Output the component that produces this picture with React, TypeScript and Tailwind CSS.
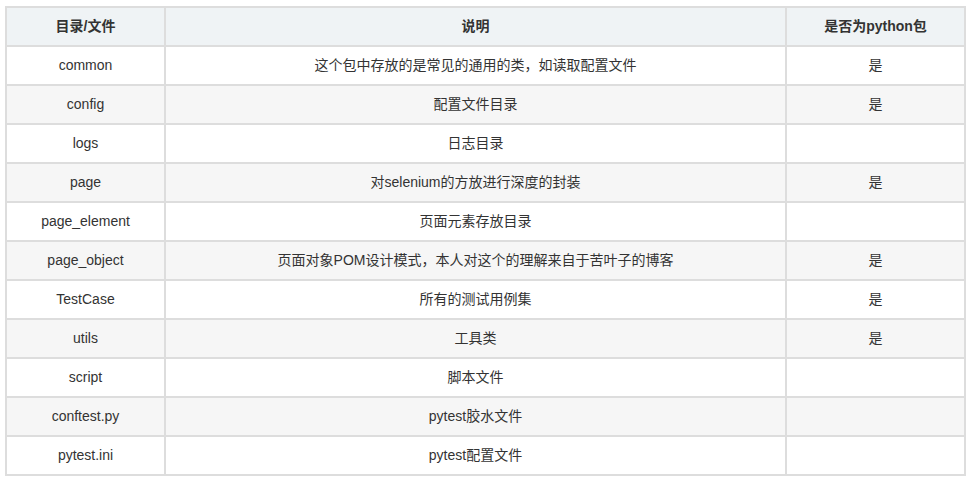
const rows: [string, string, string][] = [
  ["common", "这个包中存放的是常见的通用的类，如读取配置文件", "是"],
  ["config", "配置文件目录", "是"],
  ["logs", "日志目录", ""],
  ["page", "对selenium的方放进行深度的封装", "是"],
  ["page_element", "页面元素存放目录", ""],
  ["page_object", "页面对象POM设计模式，本人对这个的理解来自于苦叶子的博客", "是"],
  ["TestCase", "所有的测试用例集", "是"],
  ["utils", "工具类", "是"],
  ["script", "脚本文件", ""],
  ["conftest.py", "pytest胶水文件", ""],
  ["pytest.ini", "pytest配置文件", ""],
]

export default function App() {
  return (
    <div className="h-[480px] w-[971px] bg-white pl-[5px] pt-[6px] font-['Liberation_Sans','Noto_Sans_CJK_SC',sans-serif] text-[14px] text-[#333]">
      <table className="w-[961px] table-fixed border-collapse">
        <colgroup>
          <col className="w-[159px]" />
          <col className="w-[621px]" />
          <col />
        </colgroup>
        <thead>
          <tr className="h-[39px] bg-[#eff3f5]">
            <th className="border-2 border-[#dddddd] text-center font-bold">目录/文件</th>
            <th className="border-2 border-[#dddddd] text-center font-bold">说明</th>
            <th className="border-2 border-[#dddddd] text-center font-bold">是否为python包</th>
          </tr>
        </thead>
        <tbody>
          {rows.map(([name, desc, pkg], i) => (
            <tr key={name} className={`h-[39px] ${i % 2 === 1 ? "bg-[#f6f6f6]" : "bg-white"}`}>
              <td className="border-2 border-[#dddddd] text-center">{name}</td>
              <td className="border-2 border-[#dddddd] text-center">{desc}</td>
              <td className="border-2 border-[#dddddd] text-center">{pkg}</td>
            </tr>
          ))}
        </tbody>
      </table>
    </div>
  )
}
